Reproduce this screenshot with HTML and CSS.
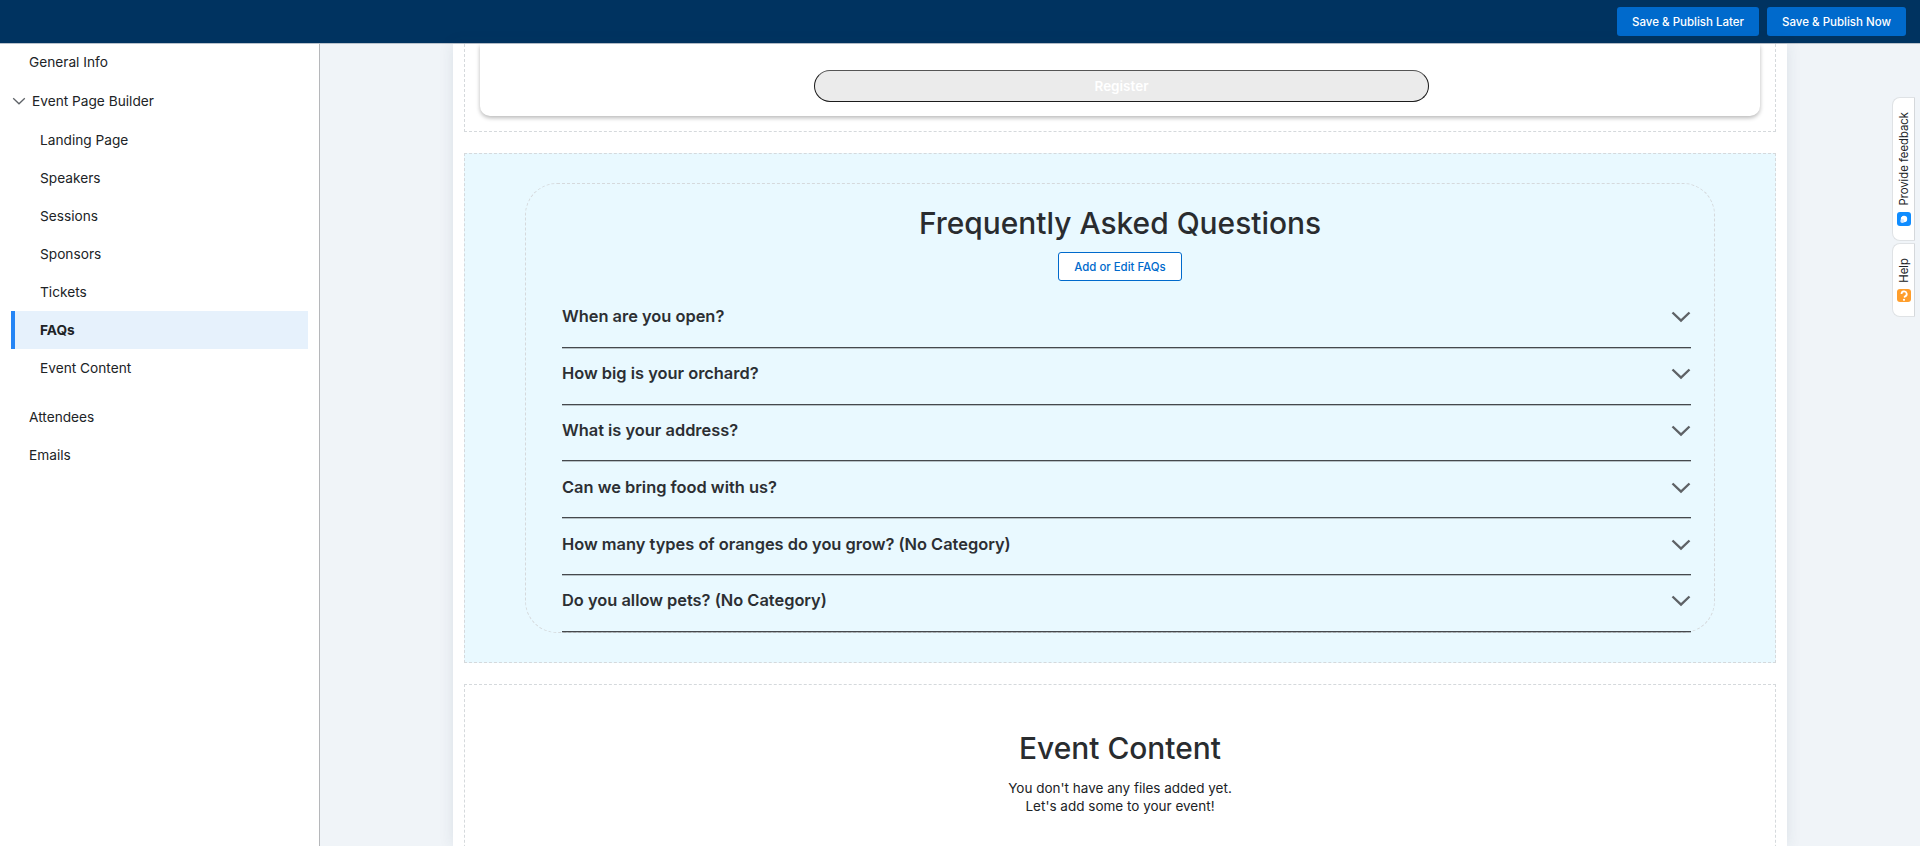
FILE: index.html
```html
<!DOCTYPE html>
<html lang="en">
<head>
<meta charset="utf-8">
<title>Event Page Builder</title>
<link rel="stylesheet" href="styles.css">
</head>
<body>
<header class="topbar">
  <button class="publish">Save &amp; Publish Later</button>
  <button class="publish">Save &amp; Publish Now</button>
</header>
<div class="workspace">
  <nav class="sidebar">
    <a class="nav-top nav-first">General Info</a>
    <a class="nav-top nav-parent">
      <svg class="nav-caret" width="14" height="8" viewBox="0 0 14 8"><path d="M1.2 1.2 7 6.8l5.8-5.6" fill="none" stroke="#5f6368" stroke-width="1.3"/></svg>
      Event Page Builder
    </a>
    <a class="nav-sub">Landing Page</a>
    <a class="nav-sub">Speakers</a>
    <a class="nav-sub">Sessions</a>
    <a class="nav-sub">Sponsors</a>
    <a class="nav-sub">Tickets</a>
    <a class="nav-sub nav-active">FAQs</a>
    <a class="nav-sub">Event Content</a>
    <a class="nav-top nav-gap">Attendees</a>
    <a class="nav-top">Emails</a>
  </nav>
  <main class="canvas">
    <div class="panel">
      <section class="block block-register">
        <div class="card">
          <button class="register">Register</button>
        </div>
      </section>
      <section class="block block-faq">
        <div class="faq-inner">
          <h2 class="title">Frequently Asked Questions</h2>
          <button class="edit-faqs">Add or Edit FAQs</button>
          <ul class="faq-list">
            <li class="faq-row"><span>When are you open?</span><svg class="chev" width="20" height="12" viewBox="0 0 20 12"><path d="M1.500 1.500 10 9.500l8.500-8" fill="none" stroke="#5e6266" stroke-width="2.400"/></svg></li>
            <li class="faq-row"><span>How big is your orchard?</span><svg class="chev" width="20" height="12" viewBox="0 0 20 12"><path d="M1.500 1.500 10 9.500l8.500-8" fill="none" stroke="#5e6266" stroke-width="2.400"/></svg></li>
            <li class="faq-row"><span>What is your address?</span><svg class="chev" width="20" height="12" viewBox="0 0 20 12"><path d="M1.500 1.500 10 9.500l8.500-8" fill="none" stroke="#5e6266" stroke-width="2.400"/></svg></li>
            <li class="faq-row"><span>Can we bring food with us?</span><svg class="chev" width="20" height="12" viewBox="0 0 20 12"><path d="M1.500 1.500 10 9.500l8.500-8" fill="none" stroke="#5e6266" stroke-width="2.400"/></svg></li>
            <li class="faq-row"><span>How many types of oranges do you grow? (No Category)</span><svg class="chev" width="20" height="12" viewBox="0 0 20 12"><path d="M1.500 1.500 10 9.500l8.500-8" fill="none" stroke="#5e6266" stroke-width="2.400"/></svg></li>
            <li class="faq-row"><span>Do you allow pets? (No Category)</span><svg class="chev" width="20" height="12" viewBox="0 0 20 12"><path d="M1.500 1.500 10 9.500l8.500-8" fill="none" stroke="#5e6266" stroke-width="2.400"/></svg></li>
          </ul>
        </div>
      </section>
      <section class="block block-content">
        <h2 class="title">Event Content</h2>
        <p class="empty">You don't have any files added yet.<br>Let's add some to your event!</p>
      </section>
    </div>
  </main>
</div>
<aside class="side-tabs">
  <div class="side-tab tab-feedback">
    <svg width="14" height="14" viewBox="0 0 14 14"><rect width="14" height="14" rx="3" fill="#0f8cff"/><circle cx="7" cy="7" r="3.200" fill="#fff"/><circle cx="5.300" cy="8.900" r="2" fill="#cfe6ff"/><path d="M3 5.500 6 3" stroke="#0f8cff" stroke-width="1"/></svg>
    <span>Provide feedback</span>
  </div>
  <div class="side-tab tab-help">
    <svg width="14" height="13" viewBox="0 0 14 13"><rect width="14" height="13" rx="3" fill="#ff9e2c"/><path d="M4.500 5a2.600 2.600 0 1 1 3.500 2.400L7.200 8.500" fill="none" stroke="#fff" stroke-width="1.800"/><circle cx="7" cy="10.800" r="1.100" fill="#fff"/></svg>
    <span>Help</span>
  </div>
</aside>
</body>
</html>
```

FILE: styles.css
```css
* { box-sizing: border-box; }
html, body { margin: 0; height: 100%; overflow: hidden; }
body {
  display: flex;
  flex-direction: column;
  font-family: Inter, "Liberation Sans", sans-serif;
  color: #202326;
  background: #f0f4f8;
}
button { font-family: inherit; cursor: pointer; }

.topbar {
  flex: 0 0 44px;
  display: flex;
  justify-content: flex-end;
  align-items: flex-start;
  gap: 8px;
  padding: 7px 14px 0 0;
  background: #003360;
  border-bottom: 1px solid #b9c2cc;
}
.publish {
  height: 29px;
  padding: 0 15px;
  border: 0;
  border-radius: 3px;
  background: #006acc;
  color: #fff;
  font-size: 11.5px;
  font-weight: 500;
}

.workspace { flex: 1; display: flex; min-height: 0; }

.sidebar {
  flex: 0 0 320px;
  display: flex;
  flex-direction: column;
  padding-right: 11px;
  background: #fff;
  border-right: 1px solid #b5b7ba;
  font-size: 13.7px;
}
.nav-top, .nav-sub {
  display: flex;
  align-items: center;
  height: 38px;
  flex: none;
}
.nav-top { padding-left: 29px; }
.nav-first { height: 36px; }
.nav-parent { height: 39px; margin-top: 1px; padding-left: 12px; gap: 6px; }
.nav-parent + .nav-sub { margin-top: 1px; }
.nav-sub { margin-left: 11px; padding-left: 29px; }
.nav-active {
  font-weight: 700;
  background: #e6f1fc;
  border-left: 4px solid #2585f5;
  padding-left: 25px;
}
.nav-gap { margin-top: 11px; }

.canvas { flex: 1; display: flex; justify-content: center; min-width: 0; padding: 0 133px; }
.panel {
  width: 1334px;
  flex: none;
  display: flex;
  flex-direction: column;
  gap: 21px;
  padding: 0 11px;
  background: #fff;
  box-shadow: 0 0 14px rgba(40, 60, 80, 0.10);
  overflow: hidden;
}
.block { border: 1px dashed #d5d9dc; flex: none; }

.block-register {
  height: 88px;
  border-top: 0;
  padding: 0 15px;
}
.card {
  height: 72px;
  display: flex;
  justify-content: center;
  padding: 26px 0 0 3px;
  background: #fff;
  border-radius: 0 0 10px 10px;
  box-shadow: 0 2px 4px rgba(0, 0, 0, 0.28);
}
.register {
  width: 615px;
  height: 32px;
  border: 1px solid #1c1c1c;
  border-top-color: #555;
  border-radius: 16px;
  background: #ebebeb;
  color: #fff;
  font-size: 13.5px;
  font-weight: 600;
}

.block-faq {
  height: 510px;
  padding: 29px 60px 0;
  background: #e9f9ff;
}
.faq-inner {
  height: 450px;
  display: flex;
  flex-direction: column;
  align-items: center;
  border: 1px dashed #d5d9dc;
  border-radius: 32px;
}
.title {
  margin: 0;
  font-size: 29.9px;
  font-weight: 500;
  line-height: 40px;
  color: #292c2f;
}
.faq-inner .title { margin-top: 19px; }
.edit-faqs {
  width: 124px;
  height: 29px;
  margin-top: 9px;
  flex: none;
  padding: 0;
  background: #fff;
  border: 1px solid #006acc;
  border-radius: 3px;
  color: #006acc;
  font-size: 11.4px;
  font-weight: 500;
}
.faq-list {
  list-style: none;
  align-self: stretch;
  margin: 10px 23px 0 36px;
  padding: 0;
}
.faq-row {
  height: 56.8px;
  display: flex;
  align-items: center;
  justify-content: space-between;
  padding-bottom: 5px;
  border-bottom: 1px solid #45494d;
  box-shadow: 0 1px 0 rgba(85, 89, 93, 0.35);
  font-size: 16.4px;
  font-weight: 600;
  color: #2c2f33;
}
.chev { margin-top: 2px; }

.block-content {
  height: 400px;
  padding-top: 43px;
  text-align: center;
}
.empty {
  margin: 11px 0 0;
  font-size: 13.5px;
  line-height: 18px;
  color: #202326;
}

.side-tabs {
  position: absolute;
  top: 97px;
  right: 5px;
  display: flex;
  flex-direction: column;
  gap: 2px;
  width: 23px;
}
.side-tab {
  display: flex;
  flex-direction: column-reverse;
  align-items: center;
  justify-content: flex-start;
  gap: 6px;
  padding: 0 0 14px;
  background: #fff;
  border: 1px solid #dfe2e5;
  border-right-color: #d5d8db;
  border-radius: 8px 0 0 8px;
  font-size: 11.3px;
  color: #202326;
}
.side-tab span { writing-mode: vertical-rl; transform: rotate(180deg); white-space: nowrap; }
.tab-feedback { height: 144px; }
.tab-help { height: 74px; }
```
